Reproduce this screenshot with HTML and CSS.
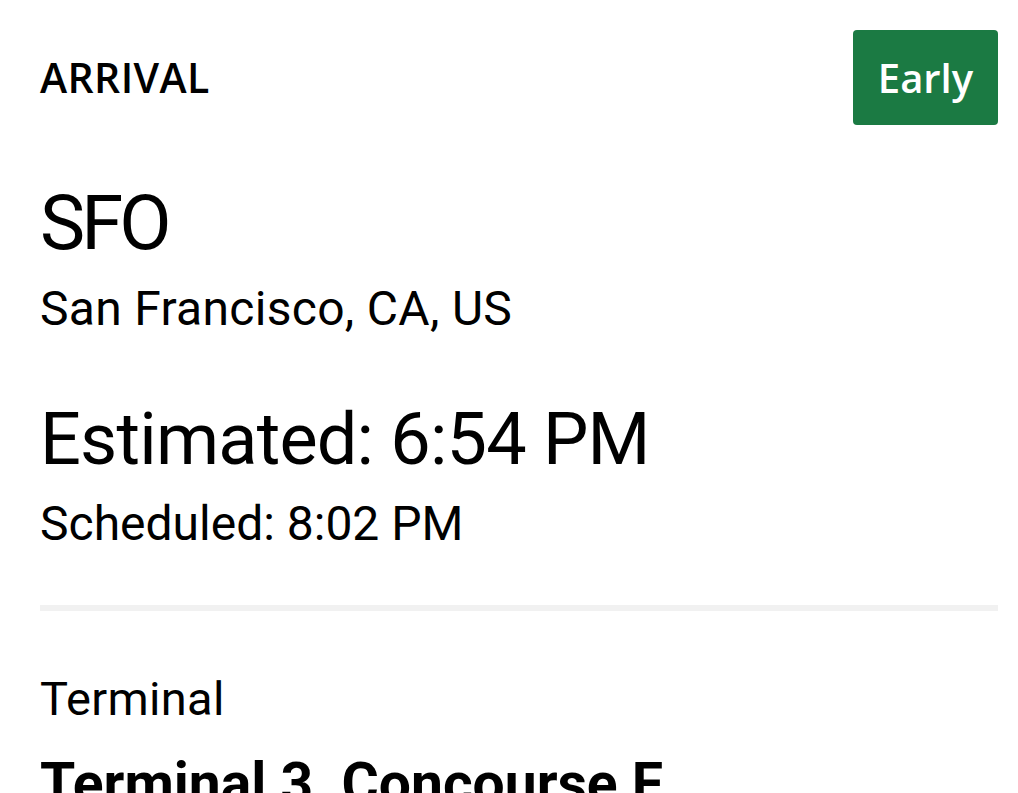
FILE: index.html
```html
<!DOCTYPE html>
<html>
<head>
<meta charset="utf-8">
<link rel="stylesheet" href="styles.css">
</head>
<body>
<div class="page">
  <div class="header">
    <div class="label">ARRIVAL</div>
    <div class="badge">Early</div>
  </div>
  <div class="airport">
    <div class="code">SFO</div>
    <div class="city">San Francisco, CA, US</div>
  </div>
  <div class="times">
    <div class="estimated">Estimated: 6:54 PM</div>
    <div class="scheduled">Scheduled: 8:02 PM</div>
  </div>
  <div class="divider"></div>
  <div class="info">
    <div class="info-label">Terminal</div>
    <div class="info-value">Terminal 3, Concourse F</div>
  </div>
</div>
</body>
</html>
```

FILE: styles.css
```css
html, body {
  margin: 0;
  padding: 0;
  background: #ffffff;
}
body {
  font-family: Roboto, "Liberation Sans", sans-serif;
  color: #000000;
}
.page {
  padding: 30px 20px 0 40px;
}
.header {
  display: flex;
  justify-content: space-between;
  align-items: center;
}
.label {
  font-family: "Open Sans", sans-serif;
  font-weight: 600;
  font-size: 41px;
  letter-spacing: 0.4px;
  line-height: 1;
}
.badge {
  font-family: "Open Sans", sans-serif;
  font-weight: 600;
  font-size: 40px;
  color: #ffffff;
  background: #1b7a43;
  border-radius: 4px;
  height: 95px;
  width: 145px;
  box-sizing: border-box;
  display: flex;
  align-items: center;
  justify-content: center;
}
.airport {
  margin-top: 60px;
}
.code {
  font-size: 76px;
  line-height: 1;
  letter-spacing: -4px;
}
.city {
  font-size: 48px;
  line-height: 1;
  margin-top: 24px;
  letter-spacing: 0.3px;
}
.times {
  margin-top: 71px;
}
.estimated {
  font-size: 72px;
  line-height: 1;
  letter-spacing: -0.8px;
}
.scheduled {
  font-size: 48px;
  line-height: 1;
  margin-top: 24px;
}
.divider {
  height: 6px;
  background: #f1f1f1;
  margin-top: 57px;
}
.info {
  padding-top: 64px;
}
.info-label {
  font-size: 47px;
  line-height: 1;
  letter-spacing: 0.3px;
}
.info-value {
  font-size: 57px;
  font-weight: 700;
  line-height: 1;
  margin-top: 33px;
}
```
